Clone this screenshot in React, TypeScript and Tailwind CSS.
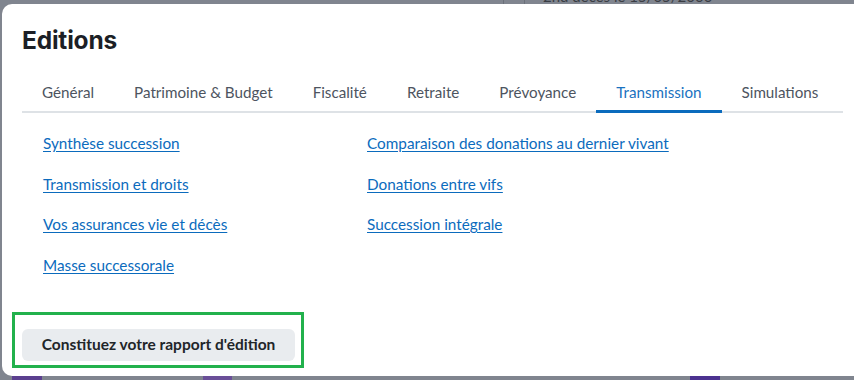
import React from 'react';

const tabs = ['Général', 'Patrimoine & Budget', 'Fiscalité', 'Retraite', 'Prévoyance', 'Transmission', 'Simulations'];

const leftLinks = ['Synthèse succession', 'Transmission et droits', 'Vos assurances vie et décès', 'Masse successorale'];
const rightLinks = ['Comparaison des donations au dernier vivant', 'Donations entre vifs', 'Succession intégrale'];

export default function App() {
  const active = 'Transmission';

  return (
    <div className="flex h-[380px] w-[854px] flex-col overflow-hidden bg-[#80858f]">
      {/* page behind the backdrop, top edge */}
      <div className="flex h-[4px] shrink-0 items-start">
        <div className="ml-[503px] h-[4px] w-px bg-[#6b707a]" />
        <div className="ml-[20px] h-[4px] w-px bg-[#6b707a]" />
        <div className="-mt-[12px] ml-[18px] whitespace-nowrap font-['Lato',sans-serif] text-[15px] leading-[16px] text-[#3a3d44]">
          2nd décès le 15/05/2000
        </div>
      </div>

      {/* modal */}
      <div className="ml-[2px] h-[372px] w-[880px] shrink-0 rounded-l-[10px] bg-white pl-[20px] pt-[20px]">
        <h2 className="h-8 font-['Inter',sans-serif] text-[24.5px] font-bold leading-8 tracking-[-0.2px] text-[#1c1f26]">Editions</h2>

        <div className="mt-4 flex w-[821px] border-b-2 border-[#dee2e6] font-['Lato',sans-serif]">
          {tabs.map((t) => (
            <button
              key={t}
              className={
                t === active
                  ? '-mb-[2px] h-[41px] shrink-0 whitespace-nowrap border-b-[3px] border-[#0b6bbd] px-5 pt-[2px] text-[15.2px] leading-[22px] text-[#1a72c0]'
                  : '-mb-[2px] h-[41px] shrink-0 whitespace-nowrap border-b-[3px] border-transparent px-5 pt-[2px] text-[15.2px] leading-[22px] text-[#4d5460]'
              }
            >
              {t}
            </button>
          ))}
        </div>

        <div className="flex pl-[21px] pt-[18px] font-['Lato',sans-serif] text-[15.3px] leading-6">
          <div className="flex w-[324px] flex-col items-start gap-[16.5px]">
            {leftLinks.map((l) => (
              <a key={l} href="#" className="text-[#0b6bbd] underline underline-offset-2">
                {l}
              </a>
            ))}
          </div>
          <div className="flex flex-col items-start gap-[16.5px]">
            {rightLinks.map((l) => (
              <a key={l} href="#" className="text-[#0b6bbd] underline underline-offset-2">
                {l}
              </a>
            ))}
          </div>
        </div>

        <div className="-ml-[10px] mt-[35px] h-[56px] w-[292px] border-[3px] border-[#22b14c] pl-[7px] pt-[14px]">
          <button className="h-[32px] w-[273px] rounded-md bg-[#e9ecef] font-['Lato',sans-serif] text-[15.5px] font-bold text-[#212529]">
            Constituez votre rapport d'édition
          </button>
        </div>
      </div>

      {/* page behind the backdrop, bottom edge */}
      <div className="flex h-[4px] shrink-0">
        <div className="ml-[12px] w-[30px] bg-[#5b3f8f]" />
        <div className="ml-[161px] w-[29px] bg-[#6a4f98]" />
        <div className="ml-[458px] w-[30px] bg-[#4c3290]" />
      </div>
    </div>
  );
}
